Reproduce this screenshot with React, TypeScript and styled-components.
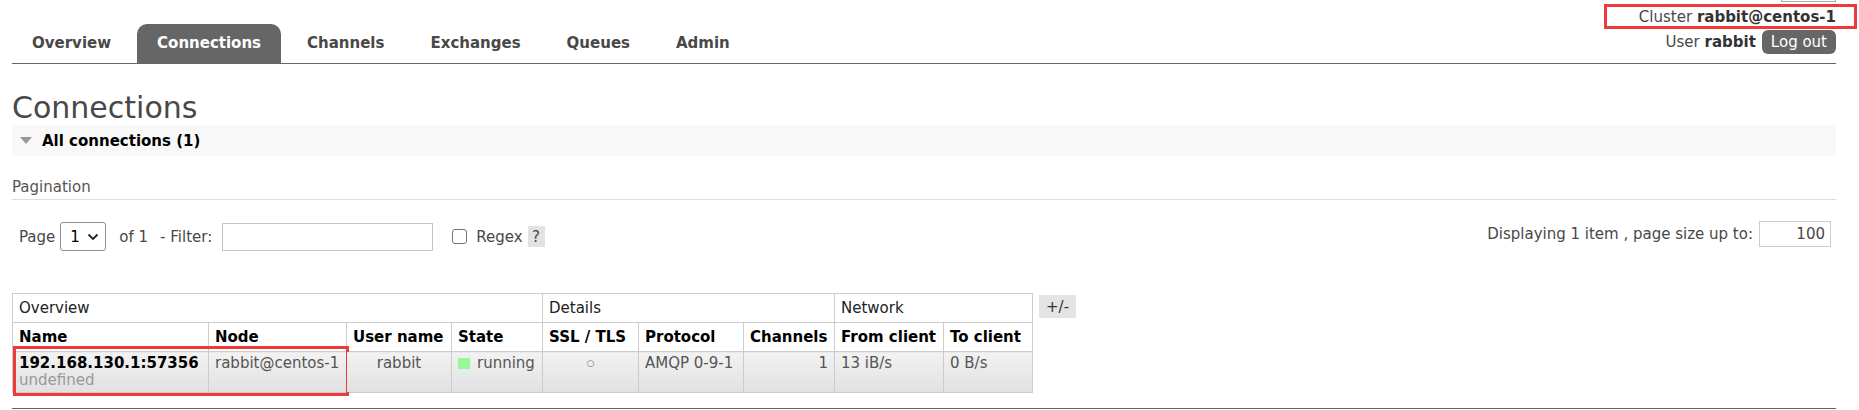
import React from "react";
import styled, { createGlobalStyle } from "styled-components";

const GlobalStyle = createGlobalStyle`
  html, body {
    margin: 0;
    padding: 0;
    background: #fff;
  }
  body {
    font-family: "DejaVu Sans", Verdana, "Noto Sans", sans-serif;
    font-size: 15px;
    color: #484848;
  }
  * {
    box-sizing: border-box;
  }
`;

const Page = styled.div`
  padding: 0 23px 0 12px;
`;

const Header = styled.header`
  display: flex;
  justify-content: space-between;
  align-items: flex-end;
  border-bottom: 1px solid #666;
`;

const Nav = styled.ul`
  display: flex;
  gap: 6px;
  list-style: none;
  margin: 0;
  padding: 0;
`;

const Tab = styled.li<{ $active?: boolean }>`
  padding: 10px 20px;
  line-height: 19px;
  font-size: 15px;
  font-weight: bold;
  color: ${(props) => (props.$active ? "#fff" : "#484848")};
  background: ${(props) => (props.$active ? "#666" : "transparent")};
  border-radius: 10px 10px 0 0;
  cursor: pointer;
`;

const HeaderInfo = styled.div`
  display: flex;
  flex-direction: column;
  align-items: flex-end;
  padding-bottom: 9px;
`;

const VhostStub = styled.div`
  width: 55px;
  height: 2px;
  border: 1px solid #aaa;
  border-top: none;
`;

const ClusterLine = styled.div`
  position: relative;
  margin-top: 6px;
  line-height: 19px;
  b {
    color: #333;
  }
`;

// red marker drawn over the screenshot
const Annotation = styled.span<{
  $top: number;
  $left: number;
  $right: number;
  $bottom: number;
}>`
  position: absolute;
  top: ${(props) => props.$top}px;
  left: ${(props) => props.$left}px;
  right: ${(props) => props.$right}px;
  bottom: ${(props) => props.$bottom}px;
  border: 3px solid #ee3a3a;
  pointer-events: none;
`;

const UserLine = styled.div`
  display: flex;
  align-items: center;
  gap: 6px;
  margin-top: 3px;
  height: 24px;
  b {
    color: #333;
  }
`;

const LogoutButton = styled.button`
  height: 24px;
  padding: 0 9px;
  border: none;
  border-radius: 6px;
  background: #666;
  color: #fff;
  font-family: inherit;
  font-size: 15px;
  line-height: 24px;
`;

const Title = styled.h1`
  margin: 27px 0 0;
  font-size: 30px;
  line-height: 34px;
  font-weight: normal;
  color: #484848;
`;

const SectionHeader = styled.div`
  display: flex;
  align-items: center;
  gap: 10px;
  height: 31px;
  padding-left: 8px;
  background: #f8f8f8;
  font-weight: bold;
  color: #000;
`;

const Toggle = styled.span`
  width: 0;
  height: 0;
  border-left: 6.5px solid transparent;
  border-right: 6.5px solid transparent;
  border-top: 7px solid #999;
`;

const SubHeading = styled.h3`
  margin: 22px 0 0;
  padding-bottom: 2px;
  font-size: 15px;
  line-height: 19px;
  font-weight: normal;
  color: #555;
  border-bottom: 1px solid #ddd;
`;

const PaginationRow = styled.div`
  display: flex;
  justify-content: space-between;
  align-items: flex-start;
  margin-top: 22px;
`;

const PageControls = styled.div`
  display: flex;
  align-items: center;
  height: 29px;
  padding-left: 7px;
`;

const Label = styled.span<{ $ml?: number }>`
  margin-left: ${(props) => props.$ml ?? 0}px;
  white-space: nowrap;
`;

const SelectBox = styled.div`
  display: flex;
  align-items: center;
  justify-content: space-between;
  width: 46px;
  height: 29px;
  margin-left: 5px;
  padding: 0 6px 0 9px;
  border: 1px solid #8f8f8f;
  border-radius: 3px;
  color: #000;
  background: #fff;
`;

const TextInput = styled.input`
  width: 211px;
  height: 28px;
  margin-left: 10px;
  border: 1px solid #c4c4c4;
  font-family: inherit;
  font-size: 15px;
  padding: 0 4px;
`;

const Checkbox = styled.input`
  appearance: none;
  width: 15px;
  height: 15px;
  margin: 0 0 0 19px;
  border: 1px solid #767676;
  border-radius: 3px;
  background: #fff;
`;

const HelpBadge = styled.span`
  display: inline-flex;
  align-items: center;
  justify-content: center;
  width: 17px;
  height: 21px;
  margin-left: 5px;
  background: #e2e2e2;
  color: #444;
`;

const PageSize = styled.div`
  display: flex;
  align-items: center;
  gap: 6px;
  margin-top: -1px;
  margin-right: 5px;
`;

const SizeInput = styled.input`
  width: 72px;
  height: 26px;
  border: 1px solid #ccc;
  font-family: inherit;
  font-size: 15px;
  color: #484848;
  text-align: right;
  padding: 0 5px;
`;

const TableRow = styled.div`
  display: flex;
  align-items: flex-start;
  gap: 6px;
  margin-top: 42px;
`;

const Table = styled.table`
  border-collapse: collapse;
  table-layout: fixed;
  width: 1020px;
`;

const Col = styled.col<{ $w: number }>`
  width: ${(props) => props.$w}px;
`;

const GroupTh = styled.th`
  padding: 6px 6px 5px;
  line-height: 17px;
  border: 1px solid #ccc;
  font-weight: normal;
  text-align: left;
  color: #222;
  background: #fff;
`;

const Th = styled.th`
  padding: 6px 6px 5px;
  line-height: 17px;
  border: 1px solid #ccc;
  font-weight: bold;
  text-align: left;
  color: #000;
  background: #fff;
  white-space: nowrap;
`;

const Td = styled.td<{ $align?: "left" | "center" | "right" }>`
  position: relative;
  padding: 3px 6px;
  line-height: 17px;
  vertical-align: top;
  border: 1px solid #ccc;
  text-align: ${(props) => props.$align ?? "left"};
  color: #555;
  background: linear-gradient(#f2f2f2, #e1e1e1);
  white-space: nowrap;
`;

const ConnName = styled.div`
  font-weight: bold;
  color: #000;
`;

const Muted = styled.div`
  color: #999;
`;

const StateDot = styled.span`
  display: inline-block;
  width: 12px;
  height: 11px;
  margin-right: 7px;
  background: #98f898;
  vertical-align: -1px;
`;

const TlsMark = styled.span`
  font-size: 9px;
  color: #777;
  vertical-align: 2px;
`;

const ColumnsButton = styled.button`
  height: 23px;
  margin-top: 2px;
  padding: 0 7px;
  border: none;
  background: #e4e4e4;
  color: #333;
  font-family: inherit;
  font-size: 15px;
`;

const FooterRule = styled.div`
  margin-top: 15px;
  border-top: 1px solid #666;
`;

const tabs = ["Overview", "Connections", "Channels", "Exchanges", "Queues", "Admin"];

const columns = [196, 138, 105, 91, 96, 105, 91, 109, 89];

const App = () => {
  return (
    <>
      <GlobalStyle />
      <Page>
        <Header>
          <Nav>
            {tabs.map((tab) => (
              <Tab key={tab} $active={tab === "Connections"}>
                {tab}
              </Tab>
            ))}
          </Nav>
          <HeaderInfo>
            <VhostStub />
            <ClusterLine>
              Cluster <b>rabbit@centos-1</b>
              <Annotation $top={-4} $left={-35} $right={-21} $bottom={-2} />
            </ClusterLine>
            <UserLine>
              <span>
                User <b>rabbit</b>
              </span>
              <LogoutButton>Log out</LogoutButton>
            </UserLine>
          </HeaderInfo>
        </Header>

        <Title>Connections</Title>
        <SectionHeader>
          <Toggle />
          All connections (1)
        </SectionHeader>

        <SubHeading>Pagination</SubHeading>
        <PaginationRow>
          <PageControls>
            <Label>Page</Label>
            <SelectBox>
              1
              <svg width="12" height="8" viewBox="0 0 12 8">
                <path d="M1.5 1.5 L6 6 L10.5 1.5" fill="none" stroke="#222" strokeWidth="1.8" />
              </svg>
            </SelectBox>
            <Label $ml={13}>of 1</Label>
            <Label $ml={12}>- Filter:</Label>
            <TextInput type="text" />
            <Checkbox type="checkbox" />
            <Label $ml={9}>Regex</Label>
            <HelpBadge>?</HelpBadge>
          </PageControls>
          <PageSize>
            <Label>Displaying 1 item , page size up to:</Label>
            <SizeInput type="text" defaultValue="100" />
          </PageSize>
        </PaginationRow>

        <TableRow>
          <Table>
            <colgroup>
              {columns.map((w, i) => (
                <Col key={i} $w={w} />
              ))}
            </colgroup>
            <thead>
              <tr>
                <GroupTh colSpan={4}>Overview</GroupTh>
                <GroupTh colSpan={3}>Details</GroupTh>
                <GroupTh colSpan={2}>Network</GroupTh>
              </tr>
              <tr>
                <Th>Name</Th>
                <Th>Node</Th>
                <Th>User name</Th>
                <Th>State</Th>
                <Th>SSL / TLS</Th>
                <Th>Protocol</Th>
                <Th>Channels</Th>
                <Th>From client</Th>
                <Th>To client</Th>
              </tr>
            </thead>
            <tbody>
              <tr>
                <Td>
                  <ConnName>192.168.130.1:57356</ConnName>
                  <Muted>undefined</Muted>
                  <Annotation $top={-6} $left={0} $right={-141} $bottom={-4} />
                </Td>
                <Td>rabbit@centos-1</Td>
                <Td $align="center">rabbit</Td>
                <Td>
                  <StateDot />
                  running
                </Td>
                <Td $align="center">
                  <TlsMark>○</TlsMark>
                </Td>
                <Td>AMQP 0-9-1</Td>
                <Td $align="right">1</Td>
                <Td>13 iB/s</Td>
                <Td>0 B/s</Td>
              </tr>
            </tbody>
          </Table>
          <ColumnsButton>+/-</ColumnsButton>
        </TableRow>

        <FooterRule />
      </Page>
    </>
  );
};

export default App;
